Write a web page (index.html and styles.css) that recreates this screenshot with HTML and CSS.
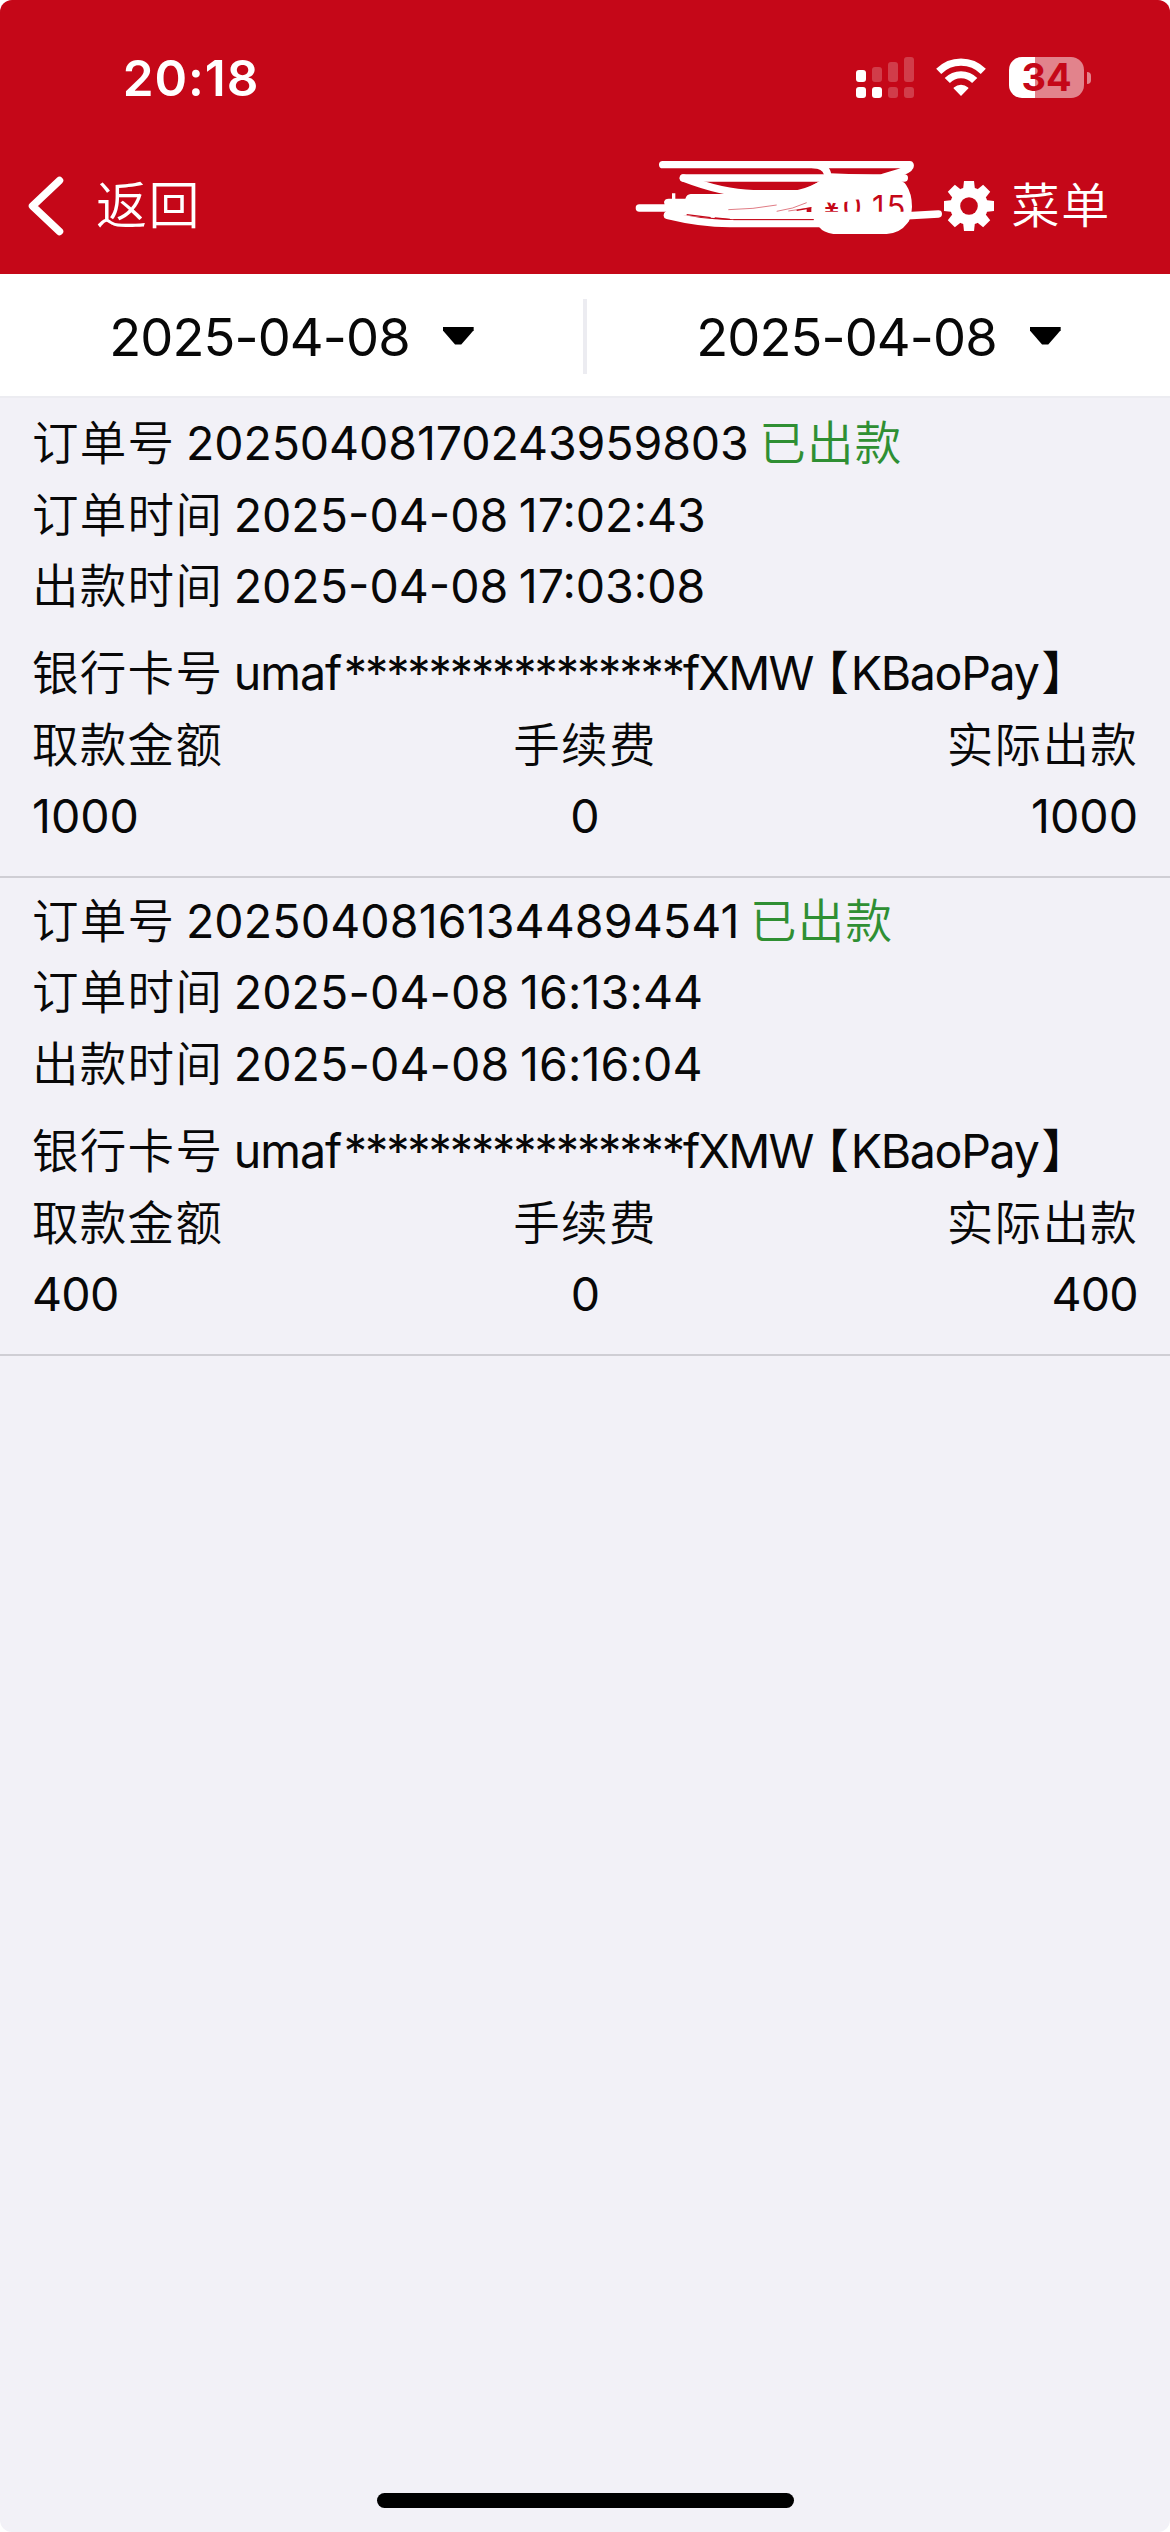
FILE: index.html
```html
<!DOCTYPE html>
<html lang="zh-CN">
<head>
<meta charset="utf-8">
<title>取款记录</title>
<link rel="stylesheet" href="styles.css">
</head>
<body>
<div class="app">
  <header class="header">
    <div class="status">
      <span class="time">20:18</span>
      <div class="status-icons">
        <svg class="signal" width="58" height="41" viewBox="0 0 58 41" fill="#fff">
          <rect x="0" y="13" width="10" height="12" rx="3"/>
          <rect x="16" y="10" width="10" height="15" rx="3" opacity=".22"/>
          <rect x="32" y="5" width="10" height="20" rx="3" opacity=".22"/>
          <rect x="48" y="0" width="10" height="25" rx="3" opacity=".22"/>
          <rect x="0" y="30" width="10" height="11" rx="3"/>
          <rect x="16" y="30" width="10" height="11" rx="3"/>
          <rect x="32" y="30" width="10" height="11" rx="3" opacity=".22"/>
          <rect x="48" y="30" width="10" height="11" rx="3" opacity=".22"/>
        </svg>
        <svg class="wifi" width="50" height="41" viewBox="0 0 50 41" fill="none">
          <path d="M2.7 14.4A31.5 31.5 0 0 1 47.3 14.4" stroke="#fff" stroke-width="7.2"/>
          <path d="M11.3 23.6A19 19 0 0 1 38.7 23.6" stroke="#fff" stroke-width="7.2"/>
          <path d="M25 39L17.7 31.6Q17.2 31 17.9 30.4Q21 27.7 25 27.7Q29 27.7 32.1 30.4Q32.8 31 32.3 31.6Z" fill="#fff"/>
        </svg>
        <div class="battery"><span class="level">34</span><i class="nub"></i></div>
      </div>
    </div>
    <nav class="nav">
      <a class="back">
        <svg width="36" height="60" viewBox="0 0 36 60" fill="none" stroke="#fff" stroke-width="7.5" stroke-linecap="round" stroke-linejoin="round"><path d="M31.5 4.5L4.5 30L31.5 55.5"/></svg>
        <span>返回</span>
      </a>
      <div class="nav-right">
        <svg class="balance" width="310" height="100" viewBox="42 48 930 300">
          <g fill="none" stroke="#fff" stroke-width="22" stroke-linecap="round" stroke-linejoin="round">
            <path d="M128 74H870Q874 84 850 94L790 112"/>
            <path d="M580 74Q615 76 622 100"/>
            <path d="M190 114H853"/>
            <path d="M190 114Q310 160 400 161H535Q575 152 610 130"/>
            <path d="M58 204H150"/>
            <path d="M142 226Q240 250 330 251H620"/>
            <path d="M850 228L955 222"/>
          </g>
          <path fill="#fff" d="M132 186Q134 176 146 176H156V160H166V176H196Q200 163 212 162H330L400 152H540Q575 140 602 122L630 100L780 106Q845 116 858 134Q876 160 876 200Q874 236 862 250Q840 280 800 282H640Q610 278 598 262L580 238H340L250 232L140 222Z"/>
          <g fill="none" stroke="#c50718" stroke-width="1.6">
            <path d="M325 209Q400 208 470 195M470 214Q520 207 560 188M505 213L575 203"/>
            <path d="M340 239H581" stroke-width="3"/>
            <path d="M200 224L272 233M284 234L330 238" stroke-width="4"/>
          </g>
          <path d="M530 209L574 201V216H560V208L530 213Z" fill="#c50718"/>
          <text class="balance-text" x="610" y="235">¥0.15</text>
          <path fill="#fff" d="M600 215H865V245H600ZM605 155H735V177Q700 178 690 184L650 190L605 186Z"/>
        </svg>
        <svg class="gear" width="50" height="50" viewBox="-25 -25 50 50">
          <g fill="#fff">
            <circle r="19"/>
            <path id="t" d="M-6 -16L-5 -25H5L6 -16V16L5 25H-5L-6 16Z"/>
            <use href="#t" transform="rotate(45)"/>
            <use href="#t" transform="rotate(90)"/>
            <use href="#t" transform="rotate(135)"/>
          </g>
          <circle r="8.8" fill="#c50718"/>
        </svg>
        <span class="menu">菜单</span>
      </div>
    </nav>
  </header>

  <div class="dates">
    <div class="date"><span>2025-04-08</span><i class="caret"></i></div>
    <i class="divider"></i>
    <div class="date"><span>2025-04-08</span><i class="caret"></i></div>
  </div>

  <main class="list">
    <section class="record">
      <p><span class="zh">订单号</span> <span class="order-no">20250408170243959803</span> <span class="zh paid">已出款</span></p>
      <p><span class="zh">订单时间</span> 2025-04-08 17:02:43</p>
      <p><span class="zh">出款时间</span> 2025-04-08 17:03:08</p>
      <p class="card"><span class="zh">银行卡号</span> <span class="head">umaf</span><span class="mask">****************</span><span class="tail">fXMW</span><span class="open">【</span><span class="bank">KBaoPay</span>】</p>
      <div class="amounts zh"><span>取款金额</span><span>手续费</span><span>实际出款</span></div>
      <div class="amounts"><span>1000</span><span>0</span><span>1000</span></div>
    </section>
    <section class="record">
      <p><span class="zh">订单号</span> <span class="order-no loose">20250408161344894541</span> <span class="zh paid">已出款</span></p>
      <p><span class="zh">订单时间</span> <span class="loose">2025-04-08 16:13:44</span></p>
      <p><span class="zh">出款时间</span> <span class="loose">2025-04-08 16:16:04</span></p>
      <p class="card"><span class="zh">银行卡号</span> <span class="head">umaf</span><span class="mask">****************</span><span class="tail">fXMW</span><span class="open">【</span><span class="bank">KBaoPay</span>】</p>
      <div class="amounts zh"><span>取款金额</span><span>手续费</span><span>实际出款</span></div>
      <div class="amounts narrow"><span>400</span><span>0</span><span>400</span></div>
    </section>
  </main>
  <div class="home-bar"></div>
</div>
</body>
</html>
```
FILE: styles.css
```css
* { box-sizing: border-box; margin: 0; padding: 0; }

body {
  background: #fff;
  font-family: Inter, "Noto Sans CJK SC", sans-serif;
  color: #080808;
}

.app {
  width: 1170px;
  height: 2532px;
  display: flex;
  flex-direction: column;
  background: #f2f1f7;
  border-radius: 12px;
  overflow: hidden;
}

/* Header */
.header { height: 274px; background: #c50718; color: #fff; }

.status {
  height: 138px;
  padding: 17px 79px 0 122.7px;
  display: flex;
  justify-content: space-between;
  align-items: center;
}
.time {
  font-size: 49.5px;
  font-weight: 600;
  letter-spacing: .95px;
  line-height: 60px;
  padding-top: 1px;
}
.status-icons { display: flex; align-items: center; }
.wifi { margin: 0 23px 0 22px; }
.battery { display: flex; align-items: center; gap: 3px; }
.level {
  width: 75px;
  height: 41px;
  border-radius: 13px;
  background: linear-gradient(90deg, #fff 26px, #e2838c 26px);
  color: #c50718;
  font-size: 38px;
  font-weight: 700;
  line-height: 41px;
  text-align: center;
}
.nub { width: 4px; height: 12px; border-radius: 0 6px 6px 0; background: #e2838c; }

.nav {
  height: 136px;
  padding: 0 59px 0 28px;
  display: flex;
  justify-content: space-between;
  align-items: center;
}
.back, .nav-right { display: flex; align-items: center; }
.back { gap: 32px; font-size: 51px; line-height: 60px; letter-spacing: 1.5px; font-weight: 350; }
.menu { font-size: 48px; line-height: 60px; letter-spacing: 1.7px; font-weight: 350; margin-left: 18px; }
.balance-text { font-size: 92px; letter-spacing: 7px; fill: #c50718; }

/* Date filter */
.dates {
  height: 124px;
  display: flex;
  background: #fff;
  border-bottom: 2px solid #ececf1;
}
.date {
  flex: 1;
  display: flex;
  justify-content: center;
  align-items: center;
  gap: 33px;
  padding-top: 4px;
  font-size: 52.4px;
  line-height: 72px;
  letter-spacing: -.9px;
}
.caret {
  width: 31px;
  height: 19px;
  margin-bottom: 2px;
  background: #000;
  clip-path: polygon(0 0, 100% 0, 100% 20%, 60% 95%, 40% 95%, 0 20%);
}
.divider { width: 4px; height: 75px; margin-top: 25px; background: #ececf1; }

/* Records */
.list { flex: 1; padding-top: 2px; }
.record {
  height: 477.8px;
  padding: 8px 32px 0;
  border-bottom: 2px solid #cfced4;
  font-size: 46.5px;
  line-height: 71.6px;
  word-spacing: -2.6px;
  white-space: nowrap;
}
.zh { letter-spacing: 1.3px; font-weight: 350; }
.order-no { letter-spacing: -.1px; }
.loose { letter-spacing: .12px; }
.paid { color: #2f8f33; }
.card { margin-top: 15.5px; }
.head { letter-spacing: -1px; margin-right: 2.5px; }
.mask { letter-spacing: -2.1px; }
.tail { letter-spacing: -1.8px; }
.open { font-feature-settings: "halt"; margin-left: 13px; }
.bank { letter-spacing: -1.3px; margin: 0 3px 0 2px; }
.amounts { display: grid; grid-template-columns: 1fr 1fr 1fr; }
.amounts span:nth-child(2) { text-align: center; }
.amounts span:nth-child(3) { text-align: right; }
.narrow { letter-spacing: -.7px; }

.home-bar {
  width: 417px;
  height: 15px;
  margin: 0 auto 24px;
  border-radius: 8px;
  background: #000;
}
```
